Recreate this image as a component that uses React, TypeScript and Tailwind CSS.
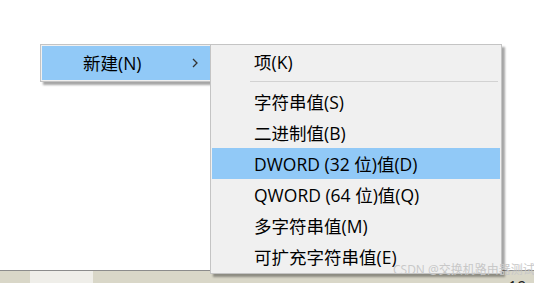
import React from 'react'

const font = { fontFamily: '"Open Sans", "Noto Sans CJK SC", sans-serif' }

const items = [
  { label: '字符串值(S)' },
  { label: '二进制值(B)' },
  { label: 'DWORD (32 位)值(D)', active: true },
  { label: 'QWORD (64 位)值(Q)' },
  { label: '多字符串值(M)' },
  { label: '可扩充字符串值(E)' },
]

export default function App() {
  return (
    <div className="relative w-[534px] h-[283px] overflow-hidden bg-white flex flex-col" style={font}>
      <div className="flex-1" />

      {/* taskbar strip at the bottom */}
      <div className="h-[1px] bg-[#8c8c8c]" />
      <div className="h-[12px] bg-[#d9d7c8] flex">
        <div className="w-[30px]" />
        <div className="w-[63px] bg-[#efeee9]" />
      </div>

      {/* parent menu */}
      <div className="absolute left-[40px] top-[44px] w-[172px] h-[38px] bg-[#f0f0f0] border border-[#c4c4c4] p-[1px] shadow-[3px_3px_2px_rgba(0,0,0,0.35)]">
        <div className="h-[34px] bg-[#91c9f7] flex items-center">
          <span className="ml-[41px] text-[17.5px] leading-[20px] text-black">新建(N)</span>
          <svg className="ml-auto mr-[12px]" width="6" height="10" viewBox="0 0 6 10">
            <path d="M1 1 L5 5 L1 9" fill="none" stroke="#333" strokeWidth="1.3" />
          </svg>
        </div>
      </div>

      {/* submenu */}
      <div className="absolute left-[210px] top-[44px] w-[292px] bg-[#f0f0f0] border border-[#c4c4c4] px-[1px] pt-[1px] pb-[1px] shadow-[3px_3px_2px_rgba(0,0,0,0.35)]">
        <div className="h-[31px] flex items-center">
          <span className="ml-[42px] text-[17.5px] leading-[20px] text-black">项(K)</span>
        </div>
        <div className="h-[9px] flex items-center">
          <div className="ml-[38px] mr-[2px] flex-1 h-[1px] bg-[#d2d2d2]" />
        </div>
        {items.map(it => (
          <div key={it.label} className={`h-[31px] flex items-center ${it.active ? 'bg-[#91c9f7]' : ''}`}>
            <span className="ml-[42px] text-[17.5px] leading-[20px] text-black">{it.label}</span>
          </div>
        ))}
      </div>

      {/* watermark and clock */}
      <div className="absolute left-[393px] top-[262px] text-[12px] leading-[16px] text-[#c8c8c8] whitespace-nowrap">
        CSDN @交换机路由器测试之路
      </div>
      <div className="absolute left-[508px] top-[277px] text-[16px] leading-[20px] text-[#222] whitespace-nowrap">
        19
      </div>
    </div>
  )
}
